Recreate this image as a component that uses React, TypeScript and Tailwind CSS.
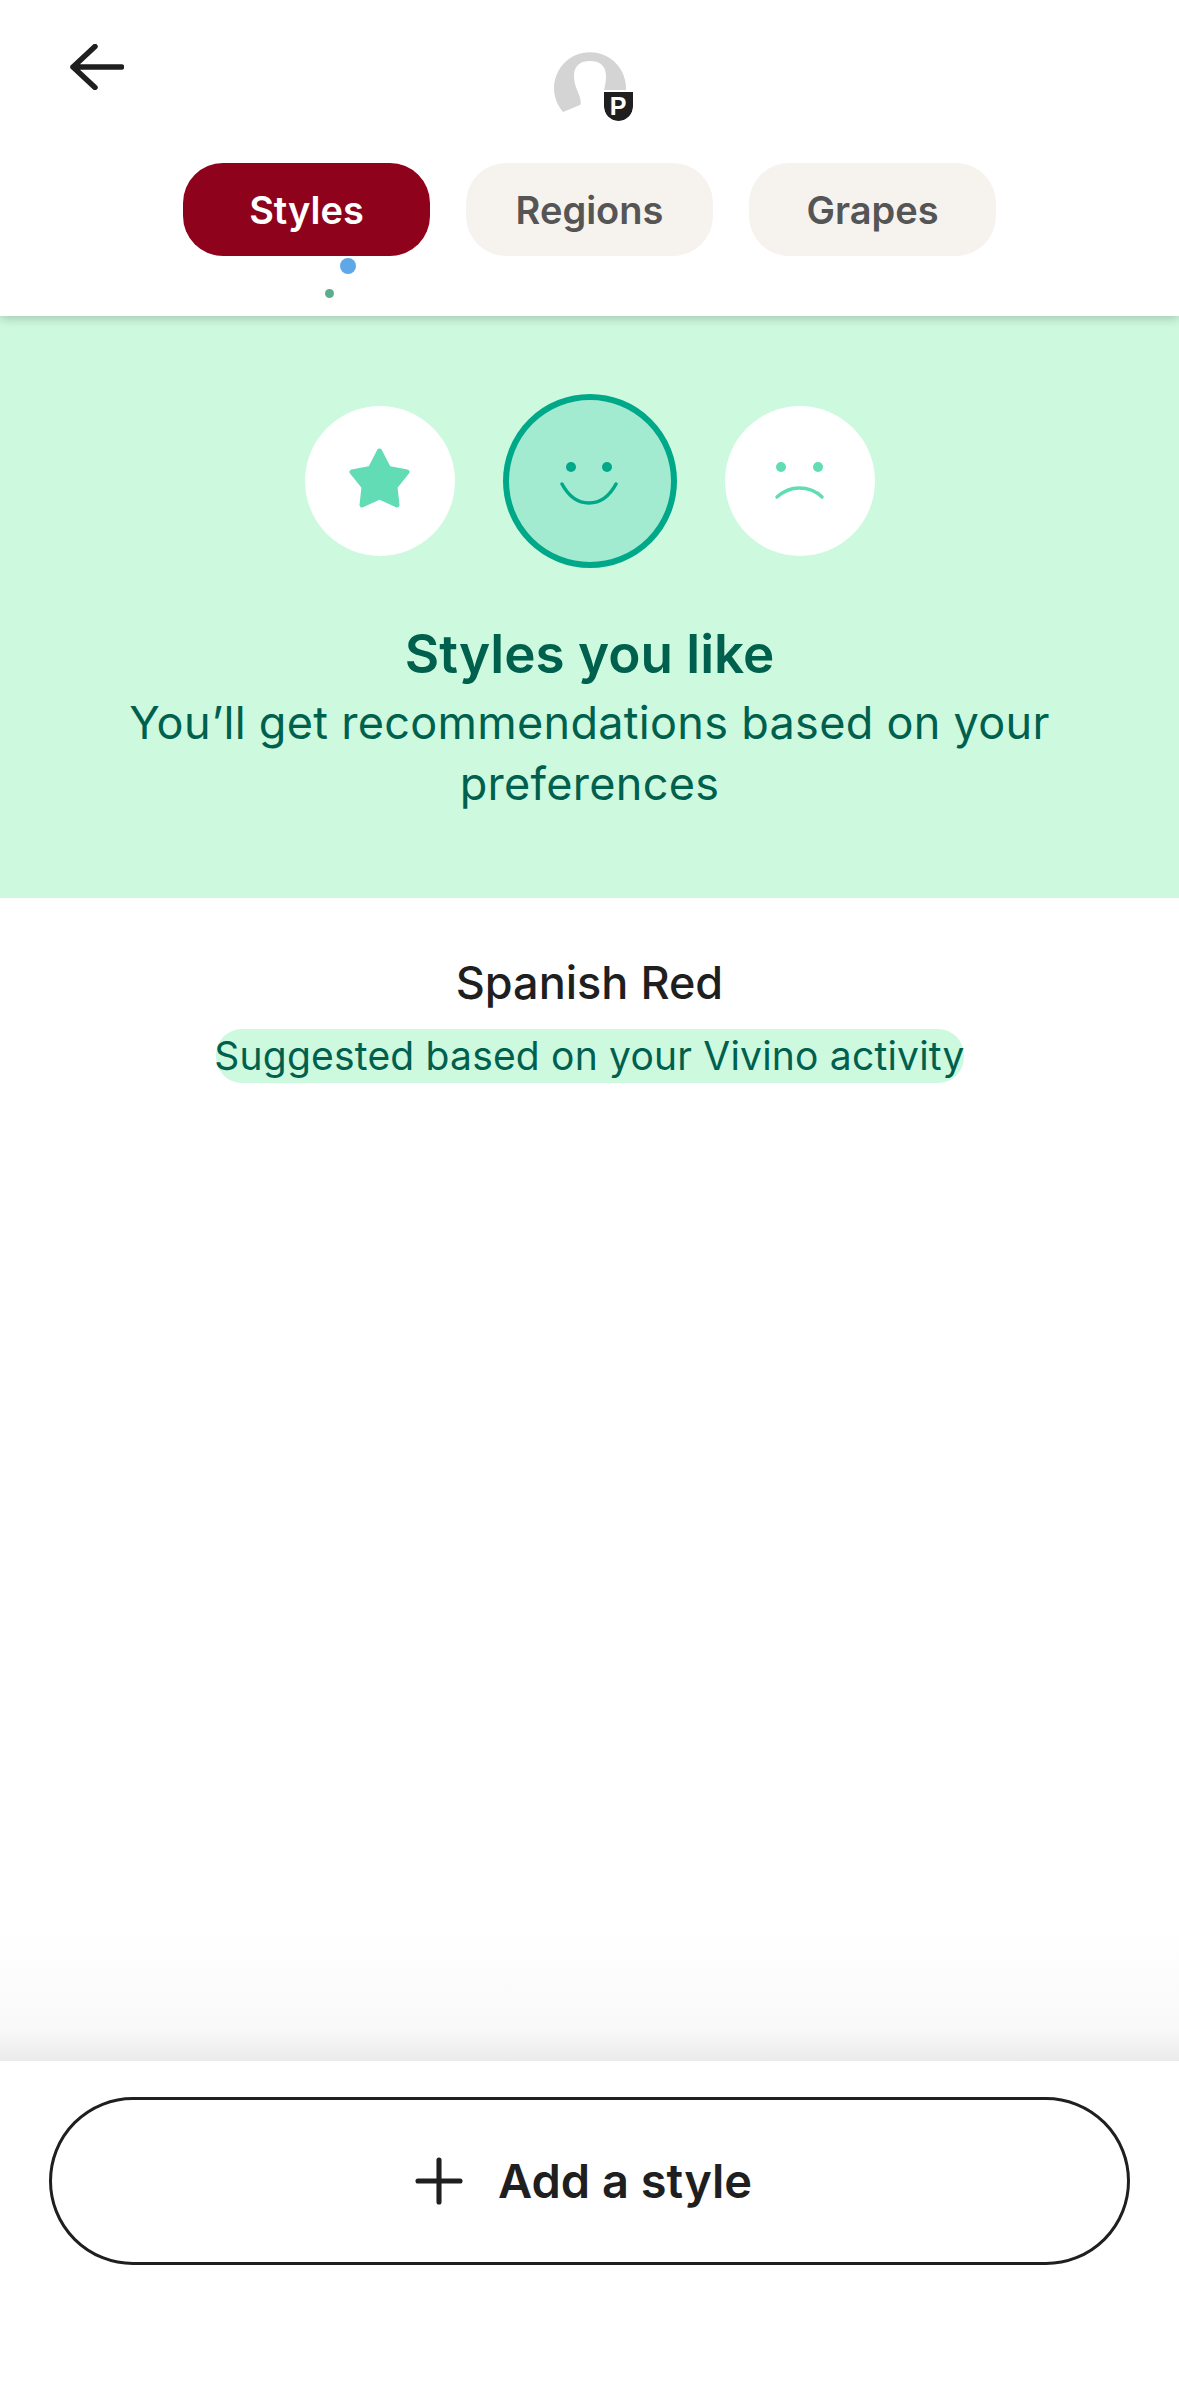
import { Plus } from 'lucide-react';

const tabs = ['Styles', 'Regions', 'Grapes'];

function BackArrow() {
  return (
    <svg width="54" height="46" viewBox="0 0 54 46" fill="none" stroke="#1f1f1f" strokeWidth="5.5" strokeLinecap="round" strokeLinejoin="round">
      <path d="M51.5 23 H3 M25 2.5 L3 23 L25 43.5" />
    </svg>
  );
}

function Avatar() {
  return (
    <div className="relative h-[72px] w-[72px] mt-[52px]">
      <svg width="72" height="60" viewBox="0 0 72 60" className="block">
        <path
          d="M9 60 A36 36 0 1 1 72 36 L72 40 L64 40 C57 46 54 50 52 58 L50 40 C50 36 52 32 52 24 C52 13 45 9 36 9 C27 9 20 13 20 24 C20 34 24 38 26 46 C27 50 27 52 26 53 Z"
          fill="#d4d4d4"
        />
      </svg>
      {/* badge over the avatar corner */}
      <div className="absolute left-[50px] top-[40px] flex h-[29px] w-[29px] items-center justify-center rounded-t-[8px] rounded-b-full bg-[#1f1f1f] outline-2 outline-white">
        <span className="font-['Liberation_Sans',sans-serif] text-[25px] font-bold leading-none text-white">P</span>
      </div>
    </div>
  );
}

function Star() {
  return (
    <svg width="61" height="60" viewBox="0 0 61 60" className="mb-[6px]">
      <path
        d="M30.5 3 L39.5 20.5 L58 24 L46 39 L48 57 L30.5 49 L13 57 L15 39 L3 24 L21.5 20.5 Z"
        fill="#62dcb4"
        stroke="#62dcb4"
        strokeWidth="5"
        strokeLinejoin="round"
      />
    </svg>
  );
}

function Smile() {
  return (
    <svg width="60" height="48" viewBox="0 0 60 48">
      <circle cx="11" cy="10" r="5" fill="#00a88a" />
      <circle cx="47" cy="10" r="5" fill="#00a88a" />
      <path d="M2 27 C9 40 19 46 29 46 C39 46 49 40 56 27" fill="none" stroke="#00a88a" strokeWidth="3.5" strokeLinecap="round" />
    </svg>
  );
}

function Frown() {
  return (
    <svg width="60" height="48" viewBox="0 0 60 48">
      <circle cx="11" cy="10" r="5" fill="#62dcb4" />
      <circle cx="48" cy="10" r="5" fill="#62dcb4" />
      <path d="M7 40 C15 33 22 31 29 31 C37 31 45 33 52 40" fill="none" stroke="#62dcb4" strokeWidth="3.5" strokeLinecap="round" />
    </svg>
  );
}

export default function App() {
  return (
    <div className="flex h-[2396px] w-[1179px] flex-col bg-white font-['Inter',sans-serif]">
      {/* Header */}
      <header className="relative z-10 h-[316px] shrink-0 bg-white shadow-[0_2px_10px_rgba(0,0,0,0.22)]">
        <div className="grid h-[163px] grid-cols-[1fr_auto_1fr]">
          <div className="pl-[70px] pt-[44px]">
            <BackArrow />
          </div>
          <Avatar />
          <div />
        </div>
        <div className="flex justify-center gap-[36px]">
          {tabs.map((tab, i) => (
            <button
              key={tab}
              className={
                i === 0
                  ? 'flex h-[93px] w-[247px] items-center justify-center rounded-[40px] bg-[#8f021c] pt-[2px] text-[38px] font-semibold text-white'
                  : 'flex h-[93px] w-[247px] items-center justify-center rounded-[40px] bg-[#f6f3ef] pt-[2px] text-[38px] font-semibold text-[#555555]'
              }
            >
              {tab}
            </button>
          ))}
        </div>
        <span className="absolute left-[340px] top-[258px] h-[16px] w-[16px] rounded-full bg-[#5fa8e8]" />
        <span className="absolute left-[325px] top-[289px] h-[9px] w-[9px] rounded-full bg-[#5aae8e]" />
      </header>

      {/* Rating banner */}
      <section className="flex h-[582px] shrink-0 flex-col items-center bg-[#cdf9df] pt-[78px]">
        <div className="flex items-center">
          <div className="flex h-[150px] w-[150px] items-center justify-center rounded-full bg-white">
            <Star />
          </div>
          <div className="ml-[48px] mr-[48px] flex h-[174px] w-[174px] items-center justify-center rounded-full border-[6px] border-[#00a88a] bg-[#a3ebd0]">
            <Smile />
          </div>
          <div className="flex h-[150px] w-[150px] items-center justify-center rounded-full bg-white">
            <Frown />
          </div>
        </div>
        <h1 className="mt-[55px] text-[53px] font-semibold leading-[62px] text-[#00604e]">Styles you like</h1>
        <p className="mt-[7px] w-[1000px] text-center text-[45px] leading-[61px] tracking-[0.3px] text-[#00604e]">
          You’ll get recommendations based on your preferences
        </p>
      </section>

      {/* List */}
      <main className="relative flex flex-1 flex-col items-center pt-[60px]">
        <h2 className="text-[45px] font-medium leading-[50px] text-[#1f1f1f]">Spanish Red</h2>
        <p className="mt-[21px] flex h-[54px] w-[748px] items-center justify-center whitespace-nowrap rounded-[26px] bg-[#cdf9df] text-[39px] tracking-[0.2px] text-[#00604e]">
          Suggested based on your Vivino activity
        </p>
        <div className="absolute inset-x-0 bottom-0 h-[130px] bg-gradient-to-b from-white via-[#f9f9f9] via-75% to-[#ebebeb]" />
      </main>

      {/* Footer */}
      <footer className="flex h-[335px] shrink-0 justify-center bg-white pt-[36px]">
        <button className="flex h-[168px] w-[1081px] items-center justify-center rounded-[84px] border-[3px] border-[#1f1f1f] pr-[24px] text-[47px] font-semibold text-[#1f1f1f]">
          <Plus size={72} strokeWidth={1.7} className="mr-[23px]" color="#1f1f1f" />
          Add a style
        </button>
      </footer>
    </div>
  );
}
